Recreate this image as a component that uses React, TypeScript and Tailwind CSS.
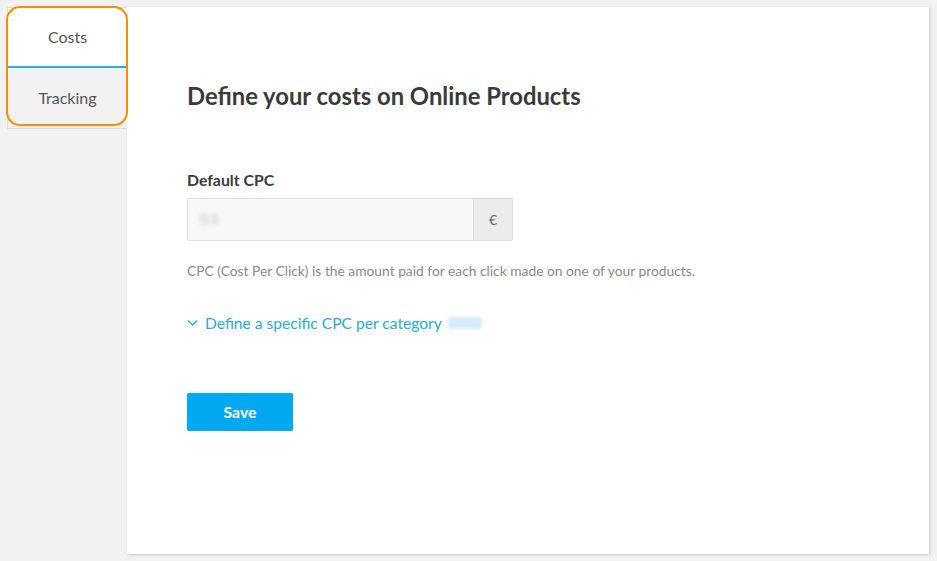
import React from "react";

const font = { fontFamily: "Lato, 'Open Sans', sans-serif" };

function ChevronDown() {
  return (
    <svg width="11" height="8" viewBox="0 0 11 8" fill="none" className="mr-[7px]">
      <path d="M1.5 2 L5.5 6 L9.5 2" stroke="#29abe2" strokeWidth="1.6" strokeLinecap="round" strokeLinejoin="round" />
    </svg>
  );
}

export default function App() {
  return (
    <div className="flex h-[561px] w-[937px] bg-[#f2f2f2] pl-[7px] pt-[7px]" style={font}>
      {/* tabs */}
      <div className="relative w-[120px] shrink-0">
        <div className="border border-r-0 border-[#dcdcdc]">
          <div className="flex h-[60px] items-center justify-center border-b-2 border-[#29abe2] bg-white text-[16px] text-[#555]">
            Costs
          </div>
          <div className="flex h-[60px] items-center justify-center bg-[#f2f2f2] text-[16px] text-[#555]">
            Tracking
          </div>
        </div>
        <div className="pointer-events-none absolute left-[-1px] top-[-1px] h-[120px] w-[122px] rounded-[14px] border-2 border-[#ff8c00]" />
      </div>

      {/* panel */}
      <div className="h-[547px] w-[802px] bg-white pl-[60px] pt-[74px] shadow-[1px_1px_3px_rgba(0,0,0,0.18)]">
        <h1 className="text-[23.8px] font-bold leading-[30px] text-[#3a3a3a]">Define your costs on Online Products</h1>

        <div className="mt-[59px] text-[15.8px] font-bold leading-[20px] text-[#3a3a3a]">Default CPC</div>
        <div className="mt-[8px] flex h-[43px] w-[326px] rounded-[2px] border border-[#dedede]">
          <div className="flex flex-1 items-center bg-[#f8f8f8] pl-[12px] text-[13px] text-[#bbb]">
            <span className="blur-[2px]">0,3</span>
          </div>
          <div className="flex w-[39px] items-center justify-center border-l border-[#dedede] bg-[#ececec] text-[14px] text-[#666]">
            €
          </div>
        </div>

        <p className="mt-[21px] text-[13.8px] leading-[18px] text-[#8a8a8a]">
          CPC (Cost Per Click) is the amount paid for each click made on one of your products.
        </p>

        <div className="mt-[33px] flex items-center text-[15.6px] leading-[20px] text-[#29abe2]">
          <ChevronDown />
          <span>Define a specific CPC per category</span>
          <span className="ml-[6px] inline-block h-[12px] w-[34px] rounded-[3px] bg-[#d6ecfa] blur-[1.5px]" />
        </div>

        <button className="mt-[60px] flex h-[38px] w-[106px] items-center justify-center rounded-[2px] bg-[#03a9f0] text-[15.8px] font-bold text-white">
          Save
        </button>
      </div>
    </div>
  );
}
